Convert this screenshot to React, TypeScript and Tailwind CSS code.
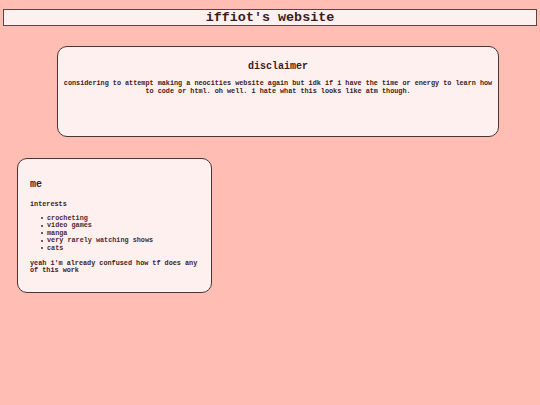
import React from 'react';

const mono = { fontFamily: '"Liberation Mono", "Courier New", monospace' };

export default function App() {
  const interests = ['crocheting', 'video games', 'manga', 'very rarely watching shows', 'cats'];

  return (
    <div className="min-h-screen w-[540px] h-[405px] bg-[#ffbdb4] text-[#3b1c1c] overflow-hidden pt-[9px]" style={mono}>
      <header className="mx-[3px] h-[17px] border border-[#5a4444] bg-[#fff0f0] flex items-center justify-center">
        <h1 className="text-[13.4px] font-bold leading-[15px]">iffiot's website</h1>
      </header>

      <section className="mt-[20px] ml-[57px] w-[442px] h-[91px] rounded-[10px] border border-[#4a3434] bg-[#fff0f0] pt-[14px] px-[4px] text-center">
        <h2 className="text-[10px] font-bold leading-[12px]">disclaimer</h2>
        <p className="mt-[6px] text-[6.8px] font-bold leading-[8.3px]">
          considering to attempt making a neocities website again but idk if i have the time or energy to learn how to code or html. oh well. i hate what this looks like atm though.
        </p>
      </section>

      <section className="mt-[21px] ml-[17px] w-[195px] h-[135px] rounded-[10px] border border-[#4a3434] bg-[#fff0f0] pt-[20px] pl-[12px] pr-[8px]">
        <h2 className="text-[10px] font-bold leading-[12px]">me</h2>
        <p className="mt-[8.5px] text-[6.8px] font-bold leading-[8px]">interests</p>
        <ul className="mt-[7px] pl-[11px] text-[6.8px] font-bold text-[#4a2a2a] leading-[7.5px]">
          {interests.map((item) => (
            <li key={item} className="flex items-center">
              <span className="w-[2px] h-[2px] rounded-full bg-[#4a2a2a] mr-[4px]" />
              <span>{item}</span>
            </li>
          ))}
        </ul>
        <p className="mt-[7.5px] text-[6.8px] font-bold leading-[7.2px]">
          yeah i'm already confused how tf does any of this work
        </p>
      </section>
    </div>
  );
}
